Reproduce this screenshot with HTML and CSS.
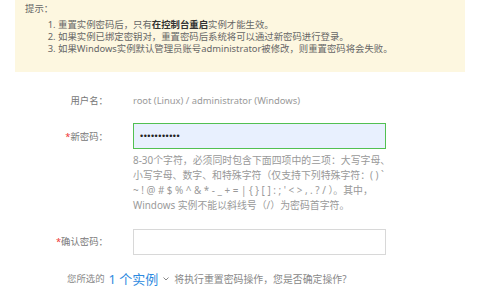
FILE: index.html
```html
<!DOCTYPE html>
<html lang="zh-CN">
<head>
<meta charset="utf-8">
<link rel="stylesheet" href="styles.css">
</head>
<body>
<div class="tips">
  <div class="tips-title">提示：</div>
  <ol class="tips-list">
    <li>重置实例密码后，只有<b>在控制台重启</b>实例才能生效。</li>
    <li>如果实例已绑定密钥对，重置密码后系统将可以通过新密码进行登录。</li>
    <li>如果Windows实例默认管理员账号administrator被修改，则重置密码将会失败。</li>
  </ol>
</div>
<div class="form">
  <div class="row row-user">
    <div class="label">用户名：</div>
    <div class="value">root (Linux) / administrator (Windows)</div>
  </div>
  <div class="row row-pass">
    <div class="label"><span class="req">*</span>新密码：</div>
    <div class="field">
      <div class="input input-active"><span class="dots">•••••••••••</span></div>
      <div class="help">
        <span class="help-line">8-30个字符，必须同时包含下面四项中的三项：大写字母、</span>
        <span class="help-line">小写字母、数字、和特殊字符（仅支持下列特殊字符：( ) `</span>
        <span class="help-line">~ ! @ # $ % ^ &amp; * - _ + = | { } [ ] : ; ' &lt; &gt; , . ? / ）。其中，</span>
        <span class="help-line">Windows 实例不能以斜线号（/）为密码首字符。</span>
      </div>
    </div>
  </div>
  <div class="row row-confirm">
    <div class="label"><span class="req">*</span>确认密码：</div>
    <div class="field">
      <div class="input"></div>
    </div>
  </div>
  <div class="confirm-line">
    <span>您所选的</span>
    <span class="count">1 个实例</span>
    <svg class="chev" width="6" height="4" viewBox="0 0 6 4"><path d="M0.5 0.5 L3 3 L5.5 0.5" fill="none" stroke="#888" stroke-width="1"/></svg>
    <span class="confirm-rest">将执行重置密码操作，您是否确定操作?</span>
  </div>
</div>
</body>
</html>
```
FILE: styles.css
```css
* { box-sizing: border-box; }
html, body {
  margin: 0;
  padding: 0;
  background: #fff;
  width: 480px;
  height: 300px;
  overflow: hidden;
  font-family: "Noto Sans", "Noto Sans CJK SC", sans-serif;
  font-size: 9.4px;
  color: #888;
}
.tips {
  margin: 0 15px;
  background: #fdf7e0;
  padding: 3px 10px 17px 10px;
  color: #666;
  line-height: 12px;
}
.tips-title { margin-bottom: 4px; }
.tips-list {
  margin: 0;
  padding-left: 33px;
}
.tips-list b { color: #333; font-weight: bold; }
.form {
  padding-top: 22px;
}
.row {
  display: grid;
  grid-template-columns: 108px 253px;
  column-gap: 25px;
  align-items: start;
}
.label {
  text-align: right;
  color: #777;
  line-height: 14px;
  white-space: nowrap;
}
.req { color: #e33; }
.value { line-height: 14px; color: #999; white-space: nowrap; }
.row-pass { margin-top: 15px; }
.row-pass .label { margin-top: 7px; }
.input {
  height: 26px;
  border: 1px solid #d8d8d8;
  background: #fff;
  display: flex;
  align-items: center;
  padding-left: 6px;
}
.input-active {
  border: 1.5px solid #52c052;
  background: #e8f0fe;
}
.dots {
  color: #222;
  font-family: "Liberation Sans", sans-serif;
  font-size: 9px;
  letter-spacing: 0.5px;
}
.help {
  margin-top: 4px;
  line-height: 15px;
  color: #999;
  font-size: 9.9px;
}
.help-line { display: block; white-space: nowrap; }
.row-confirm { margin-top: 16px; }
.row-confirm .label { margin-top: 6px; }
.confirm-line {
  margin-top: 16px;
  padding-left: 67px;
  display: flex;
  align-items: center;
  gap: 4px;
  color: #888;
  line-height: 16px;
}
.confirm-rest { font-size: 9.9px; }
.count {
  color: #2d8ae0;
  font-size: 13px;
}
.chev { margin: 0 1px 0 1px; }
```
